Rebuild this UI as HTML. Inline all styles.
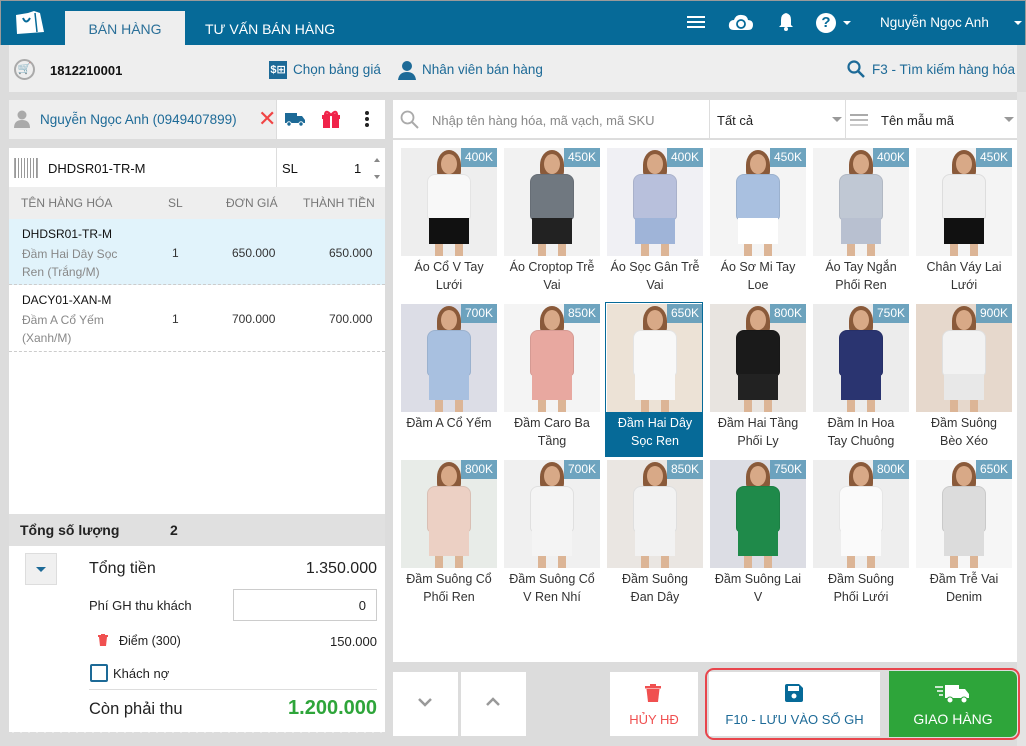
<!DOCTYPE html>
<html><head><meta charset="utf-8"><style>
*{box-sizing:border-box;margin:0;padding:0}
body{width:1026px;height:746px;overflow:hidden;background:#dcdcdc;font-family:"Liberation Sans","DejaVu Sans",sans-serif;position:relative;color:#222}
.a{position:absolute}
.top{left:0;top:0;width:1026px;height:45px;background:#066a98;border:1px solid #9a9a9a;border-bottom:none}
.tab{left:65px;top:11px;width:120px;height:34px;background:#eeeeee;color:#2a6f98;font-size:14px;text-align:center;line-height:36px}
.tab2{left:205px;top:11px;color:#fff;font-size:14px;line-height:36px}
.tb{left:9px;top:45px;width:1008px;height:47px;background:#eeeeee}
.blue{color:#1d6a97}
.prod{width:96px;height:108px;overflow:hidden}
.price{position:absolute;right:0;top:0;background:rgba(95,155,185,.9);color:#fff;font-size:12px;padding:2px 4px;line-height:15px}
.lbl{width:104px;text-align:center;font-size:12.5px;line-height:18px;color:#333}
.head{position:absolute;width:16px;height:20px;border-radius:50%;left:40px;top:6px;background:#d8a987}
.hair{position:absolute;width:24px;height:30px;border-radius:50% 50% 30% 30%;left:36px;top:2px;background:#8a5a3a}
.g{position:absolute}
.row{font-size:12px;color:#333}
.btn{background:#fff;text-align:center}
</style></head><body>
<div class="a top"></div>
<svg class="a" style="left:14px;top:10px" width="32" height="26" viewBox="0 0 32 26"><path d="M2 5 L14 3 L20 1 L26 3 L30 22 L3 24 Z" fill="#fff"/><path d="M9 8 Q12 15 16 8" stroke="#066a98" stroke-width="2" fill="none"/><path d="M21 3 L23 22" stroke="#066a98" stroke-width="1.5"/></svg>
<div class="a tab">BÁN HÀNG</div>
<div class="a tab2">TƯ VẤN BÁN HÀNG</div>
<div class="a" style="left:687px;top:16px;width:18px;height:2px;background:#fff;box-shadow:0 5px 0 #fff,0 10px 0 #fff"></div>
<svg class="a" style="left:728px;top:12px" width="26" height="20" viewBox="0 0 26 20"><path d="M6 18 Q0 18 1 12 Q2 8 6 8 Q8 2 14 3 Q19 3 20 8 Q25 8 25 13 Q25 18 20 18 Z" fill="#fff"/><circle cx="13" cy="12" r="4" fill="none" stroke="#066a98" stroke-width="1.8"/></svg>
<svg class="a" style="left:778px;top:12px" width="16" height="20" viewBox="0 0 16 20"><path d="M8 1 Q3 2 3 8 L3 13 L1 15 L15 15 L13 13 L13 8 Q13 2 8 1Z" fill="#fff"/><circle cx="8" cy="17" r="2" fill="#fff"/></svg>
<div class="a" style="left:816px;top:13px;width:20px;height:20px;border-radius:50%;background:#fff;color:#066a98;font-weight:bold;font-size:15px;text-align:center;line-height:20px">?</div>
<div class="a" style="left:843px;top:21px;border:4px solid transparent;border-top-color:#fff"></div>
<div class="a" style="left:880px;top:15px;color:#fff;font-size:13.5px">Nguyễn Ngọc Anh</div>
<div class="a" style="left:1014px;top:21px;border:4px solid transparent;border-top-color:#fff"></div>

<div class="a tb"></div>
<div class="a" style="left:14px;top:59px;width:21px;height:21px;border-radius:50%;border:2px solid #aaa;color:#aaa;font-size:11px;text-align:center;line-height:17px">🛒</div>
<div class="a" style="left:50px;top:63px;font-weight:bold;font-size:13px;color:#111">1812210001</div>
<div class="a" style="left:269px;top:61px;width:18px;height:18px;background:#1d6a97;color:#fff;font-size:11px;font-weight:bold;line-height:18px;text-align:center">$⊞</div>
<div class="a blue" style="left:293px;top:62px;font-size:13.5px">Chọn bảng giá</div>
<svg class="a" style="left:398px;top:60px" width="18" height="20" viewBox="0 0 18 20"><circle cx="9" cy="6" r="5" fill="#1d6a97"/><path d="M0 20 Q1 12 9 12 Q17 12 18 20Z" fill="#1d6a97"/></svg>
<div class="a blue" style="left:422px;top:62px;font-size:13.5px">Nhân viên bán hàng</div>
<svg class="a" style="left:847px;top:60px" width="18" height="18" viewBox="0 0 18 18"><circle cx="7" cy="7" r="5.5" fill="none" stroke="#1d6a97" stroke-width="2.2"/><path d="M11 11 L17 17" stroke="#1d6a97" stroke-width="2.5"/></svg>
<div class="a blue" style="left:872px;top:62px;font-size:13.5px">F3 - Tìm kiếm hàng hóa</div>

<div class="a" style="left:9px;top:100px;width:267px;height:39px;background:#eeeeee"></div>
<div class="a" style="left:277px;top:100px;width:108px;height:39px;background:#fff"></div>
<svg class="a" style="left:13px;top:110px" width="18" height="18" viewBox="0 0 18 18"><circle cx="9" cy="5" r="4.5" fill="#aaa"/><path d="M1 18 Q1 10 9 10 Q17 10 17 18Z" fill="#aaa"/></svg>
<div class="a blue" style="left:40px;top:112px;font-size:13.5px">Nguyễn Ngọc Anh (0949407899)</div>
<div class="a" style="left:258px;top:106px;color:#f04545;font-size:22px;line-height:26px">✕</div>
<svg class="a" style="left:285px;top:112px" width="20" height="15" viewBox="0 0 20 15"><rect x="0" y="1" width="12" height="10" fill="#1d6a97"/><path d="M12 4 L17 4 L20 8 L20 11 L12 11Z" fill="#1d6a97"/><circle cx="4" cy="12" r="2.2" fill="#1d6a97" stroke="#fff"/><circle cx="16" cy="12" r="2.2" fill="#1d6a97" stroke="#fff"/></svg>
<svg class="a" style="left:321px;top:110px" width="20" height="18" viewBox="0 0 20 18"><rect x="1" y="5" width="18" height="4" fill="#f0244a"/><rect x="2" y="9" width="16" height="9" fill="#f0244a"/><rect x="9" y="5" width="2" height="13" fill="#fff"/><path d="M10 5 Q5 -1 4 4Z M10 5 Q15 -1 16 4Z" fill="none" stroke="#f0244a" stroke-width="2"/></svg>
<div class="a" style="left:365px;top:111px;width:4px;height:4px;border-radius:50%;background:#222;box-shadow:0 6px 0 #222,0 12px 0 #222"></div>

<div class="a" style="left:9px;top:148px;width:376px;height:39px;background:#fff"></div>
<div class="a" style="left:276px;top:148px;width:1px;height:39px;background:#ddd"></div>
<div class="a" style="left:14px;top:158px;width:24px;height:20px;border:1px solid #aaa;background:repeating-linear-gradient(90deg,#999 0 1px,#fff 1px 3px);border-width:0 1px"></div>
<div class="a" style="left:48px;top:161px;font-size:13px;color:#111">DHDSR01-TR-M</div>
<div class="a" style="left:282px;top:161px;font-size:13px;color:#111">SL</div>
<div class="a" style="left:354px;top:161px;font-size:13px;color:#111">1</div>
<div class="a" style="left:374px;top:155px;border:3px solid transparent;border-bottom:4px solid #888"></div>
<div class="a" style="left:374px;top:175px;border:3px solid transparent;border-top:4px solid #888"></div>

<div class="a" style="left:9px;top:187px;width:376px;height:32px;background:#eeeeee"></div>
<div class="a" style="left:21px;top:196px;font-size:12px;color:#777">TÊN HÀNG HÓA</div>
<div class="a" style="left:168px;top:196px;font-size:12px;color:#777">SL</div>
<div class="a" style="left:226px;top:196px;font-size:12px;color:#777">ĐƠN GIÁ</div>
<div class="a" style="left:303px;top:196px;font-size:12px;color:#777">THÀNH TIỀN</div>

<div class="a" style="left:9px;top:219px;width:376px;height:295px;background:#fff"></div>
<div class="a" style="left:9px;top:219px;width:376px;height:66px;background:#e1f3fb;border-bottom:1px dashed #ccc"></div>
<div class="a" style="left:9px;top:286px;width:376px;height:66px;border-bottom:1px dashed #ccc"></div>
<div class="a row" style="left:22px;top:227px;color:#111">DHDSR01-TR-M</div>
<div class="a row" style="left:22px;top:245px;color:#888;line-height:18px">Đầm Hai Dây Sọc<br>Ren (Trắng/M)</div>
<div class="a row" style="left:172px;top:246px">1</div>
<div class="a row" style="left:232px;top:246px">650.000</div>
<div class="a row" style="left:329px;top:246px">650.000</div>
<div class="a row" style="left:22px;top:293px;color:#111">DACY01-XAN-M</div>
<div class="a row" style="left:22px;top:311px;color:#888;line-height:18px">Đầm A Cổ Yếm<br>(Xanh/M)</div>
<div class="a row" style="left:172px;top:312px">1</div>
<div class="a row" style="left:232px;top:312px">700.000</div>
<div class="a row" style="left:329px;top:312px">700.000</div>

<div class="a" style="left:9px;top:514px;width:376px;height:32px;background:#e0e0e0"></div>
<div class="a" style="left:20px;top:522px;font-size:14px;font-weight:bold;color:#222">Tổng số lượng</div>
<div class="a" style="left:170px;top:522px;font-size:14px;font-weight:bold">2</div>
<div class="a" style="left:9px;top:546px;width:376px;height:186px;background:#fff"></div>
<svg class="a" style="left:9px;top:728px" width="376" height="8"><defs><pattern id="z" width="8" height="8" patternUnits="userSpaceOnUse"><path d="M0 0 L4 5 L8 0Z" fill="#fff"/></pattern></defs><rect width="376" height="8" fill="url(#z)"/></svg>
<div class="a" style="left:25px;top:553px;width:32px;height:32px;background:#f0f0f0;border:1px solid #ddd"></div>
<div class="a" style="left:36px;top:567px;border:5px solid transparent;border-top:5px solid #1d6a97"></div>
<div class="a" style="left:89px;top:560px;font-size:16px;color:#222">Tổng tiền</div>
<div class="a" style="left:200px;top:560px;width:177px;text-align:right;font-size:16px;color:#222">1.350.000</div>
<div class="a" style="left:89px;top:598px;font-size:13px;color:#222">Phí GH thu khách</div>
<div class="a" style="left:233px;top:589px;width:144px;height:32px;border:1px solid #ccc;text-align:right;padding:8px 10px;font-size:13px">0</div>
<svg class="a" style="left:98px;top:634px" width="10" height="12" viewBox="0 0 10 12"><rect x="0" y="1" width="10" height="2" fill="#f05050"/><rect x="3" y="0" width="4" height="2" fill="#f05050"/><path d="M1 3 L9 3 L8 12 L2 12Z" fill="#f05050"/></svg>
<div class="a" style="left:119px;top:634px;font-size:12.5px">Điểm (300)</div>
<div class="a" style="left:200px;top:634px;width:177px;text-align:right;font-size:13px">150.000</div>
<div class="a" style="left:90px;top:664px;width:18px;height:18px;border:2px solid #1d6a97;border-radius:2px"></div>
<div class="a" style="left:113px;top:666px;font-size:13px">Khách nợ</div>
<div class="a" style="left:89px;top:689px;width:288px;height:1px;background:#ddd"></div>
<div class="a" style="left:89px;top:700px;font-size:16.5px">Còn phải thu</div>
<div class="a" style="left:200px;top:697px;width:177px;text-align:right;font-size:20px;font-weight:bold;color:#2ea53a">1.200.000</div>

<div class="a" style="left:393px;top:100px;width:624px;height:39px;background:#fff;border-bottom:1px solid #ddd"></div>
<svg class="a" style="left:400px;top:110px" width="19" height="19" viewBox="0 0 19 19"><circle cx="7.5" cy="7.5" r="6" fill="none" stroke="#aaa" stroke-width="1.8"/><path d="M12 12 L18 18" stroke="#aaa" stroke-width="2"/></svg>
<div class="a" style="left:432px;top:113px;font-size:13px;color:#888">Nhập tên hàng hóa, mã vạch, mã SKU</div>
<div class="a" style="left:709px;top:100px;width:1px;height:39px;background:#ddd"></div>
<div class="a" style="left:717px;top:113px;font-size:13px">Tất cả</div>
<div class="a" style="left:832px;top:117px;border:5px solid transparent;border-top:5px solid #999"></div>
<div class="a" style="left:845px;top:100px;width:1px;height:39px;background:#ddd"></div>
<div class="a" style="left:850px;top:114px;width:18px;height:2px;background:#aaa;box-shadow:0 5px 0 #bbb,0 10px 0 #ccc"></div>
<div class="a" style="left:881px;top:113px;font-size:13px">Tên mẫu mã</div>
<div class="a" style="left:1004px;top:117px;border:5px solid transparent;border-top:5px solid #999"></div>

<div class="a" style="left:393px;top:140px;width:624px;height:522px;background:#fff"></div>
<div class="a" style="left:1017px;top:92px;width:9px;height:654px;background:#e4e4e4"></div>
<div id="grid"></div>
<script>
var items=[
["400K","Áo Cổ V Tay<br>Lưới","#eeeeee","#f8f8f8","#111"],
["450K","Áo Croptop Trễ<br>Vai","#f2f2f2","#707880","#222"],
["400K","Áo Sọc Gân Trễ<br>Vai","#f0f0f4","#b8c0dc","#9fb4d8"],
["450K","Áo Sơ Mi Tay<br>Loe","#f4f4f4","#a9c0e0","#fff"],
["400K","Áo Tay Ngắn<br>Phối Ren","#f3f3f3","#c0c8d4","#b8c0d0"],
["450K","Chân Váy Lai<br>Lưới","#f4f4f4","#f0f0f0","#111"],
["700K","Đầm A Cổ Yếm","#dcdde6","#a8c0e0","#a8c0e0"],
["850K","Đầm Caro Ba<br>Tầng","#f4f4f4","#e8a8a0","#e8a8a0"],
["650K","Đầm Hai Dây<br>Sọc Ren","#ece2d6","#f8f8f8","#f8f8f8"],
["800K","Đầm Hai Tầng<br>Phối Ly","#e8e4e0","#1a1a1a","#222"],
["750K","Đầm In Hoa<br>Tay Chuông","#ececec","#2a3470","#2a3470"],
["900K","Đầm Suông<br>Bèo Xéo","#e6d8cc","#f2f2f2","#e8e8e8"],
["800K","Đầm Suông Cổ<br>Phối Ren","#e8ece8","#ecd0c4","#ecd0c4"],
["700K","Đầm Suông Cổ<br>V Ren Nhí","#f0f0f0","#f4f4f4","#f4f4f4"],
["850K","Đầm Suông<br>Đan Dây","#eae6e2","#f2f2f2","#f2f2f2"],
["750K","Đầm Suông Lai<br>V","#dcdde4","#1f8a4a","#1f8a4a"],
["800K","Đầm Suông<br>Phối Lưới","#eeeeee","#fafafa","#fafafa"],
["650K","Đầm Trễ Vai<br>Denim","#f6f6f6","#dcdcdc","#dcdcdc"]];
var xs=[401,504,607,710,813,916],ys=[148,304,460],h="";
items.forEach(function(it,i){var x=xs[i%6],y=ys[Math.floor(i/6)],sel=i==8;
h+='<div class="a prod" style="left:'+x+'px;top:'+y+'px;background:'+it[2]+'">'
+'<div class="hair"></div><div class="head"></div>'
+'<div class="g" style="left:26px;top:26px;width:44px;height:46px;background:'+it[3]+';border-radius:8px 8px 4px 4px;border:1px solid rgba(0,0,0,.08)"></div>'
+'<div class="g" style="left:28px;top:70px;width:40px;height:26px;background:'+it[4]+'"></div>'
+'<div class="g" style="left:34px;top:96px;width:8px;height:12px;background:#dcb596"></div><div class="g" style="left:54px;top:96px;width:8px;height:12px;background:#dcb596"></div>'
+'<div class="price">'+it[0]+'</div></div>';
if(sel)h+='<div class="a" style="left:'+(x-2)+'px;top:'+(y-2)+'px;width:98px;height:153px;border:1px solid #066a98"></div><div class="a" style="left:'+(x-2)+'px;top:'+(y+108)+'px;width:98px;height:45px;background:#066a98"></div>';
h+='<div class="a lbl" style="left:'+(x-4)+'px;top:'+(y+110)+'px;'+(sel?'color:#fff':'')+'">'+it[1]+'</div>';});
document.getElementById('grid').innerHTML=h;
</script>

<div class="a btn" style="left:393px;top:672px;width:65px;height:64px"></div>
<div class="a btn" style="left:461px;top:672px;width:65px;height:64px"></div>
<svg class="a" style="left:417px;top:697px" width="16" height="10"><path d="M2 2 L8 8 L14 2" stroke="#999" stroke-width="2.5" fill="none"/></svg>
<svg class="a" style="left:485px;top:697px" width="16" height="10"><path d="M2 8 L8 2 L14 8" stroke="#999" stroke-width="2.5" fill="none"/></svg>
<div class="a btn" style="left:610px;top:672px;width:88px;height:64px"></div>
<svg class="a" style="left:645px;top:684px" width="16" height="18" viewBox="0 0 16 18"><rect x="0" y="2" width="16" height="2.5" fill="#f05050"/><rect x="5" y="0" width="6" height="3" fill="#f05050"/><path d="M1.5 5 L14.5 5 L13 18 L3 18Z" fill="#f05050"/></svg>
<div class="a" style="left:610px;top:712px;width:88px;text-align:center;font-size:13px;color:#f05050">HỦY HĐ</div>
<div class="a" style="left:705px;top:668px;width:315px;height:72px;border:2px solid #e8454c;border-radius:9px"></div>
<div class="a btn" style="left:709px;top:672px;width:171px;height:64px"></div>
<svg class="a" style="left:785px;top:684px" width="18" height="18" viewBox="0 0 18 18"><path d="M0 2 Q0 0 2 0 L14 0 L18 4 L18 16 Q18 18 16 18 L2 18 Q0 18 0 16Z" fill="#066a98"/><rect x="3" y="2" width="11" height="5" fill="#fff"/><circle cx="9" cy="12" r="2.5" fill="#fff"/></svg>
<div class="a" style="left:709px;top:712px;width:171px;text-align:center;font-size:13px;color:#1d6a97">F10 - LƯU VÀO SỔ GH</div>
<div class="a" style="left:889px;top:671px;width:128px;height:66px;background:#2ea53a;border-radius:0 7px 7px 0"></div>
<svg class="a" style="left:935px;top:684px" width="34" height="20" viewBox="0 0 34 20"><path d="M0 3 H8 M2 7 H8 M4 11 H8" stroke="#fff" stroke-width="1.5"/><rect x="10" y="1" width="14" height="13" fill="#fff"/><path d="M24 5 L30 5 L34 10 L34 14 L24 14Z" fill="#fff"/><circle cx="15" cy="16" r="3" fill="#fff" stroke="#2ea53a"/><circle cx="29" cy="16" r="3" fill="#fff" stroke="#2ea53a"/></svg>
<div class="a" style="left:889px;top:711px;width:128px;text-align:center;font-size:14px;color:#fff">GIAO HÀNG</div>
</body></html>
